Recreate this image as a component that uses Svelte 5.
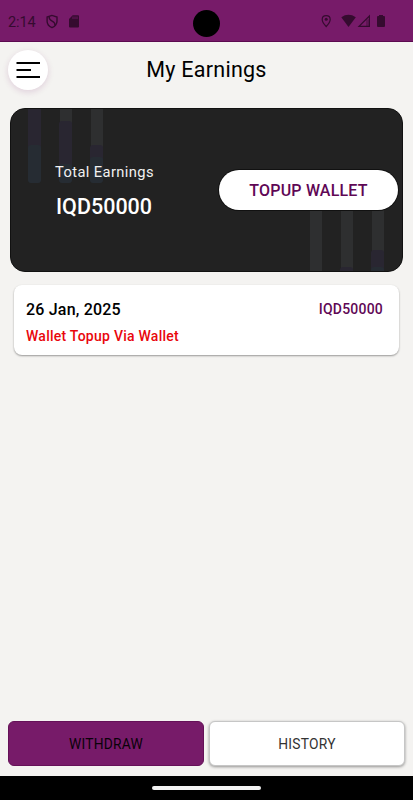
<script>
  let time = "2:14";
  let currency = "IQD";
  let total = 50000;
  let transactions = [
    { date: "26 Jan, 2025", amount: 50000, remark: "Wallet Topup Via Wallet" },
  ];
</script>

<style>
  :global(body) {
    margin: 0;
    background: #f4f3f1;
  }
  .screen {
    display: flex;
    flex-direction: column;
    height: 800px;
    font-family: Roboto, "Liberation Sans", sans-serif;
    color: #000;
    background: #f4f3f1;
  }
  .status {
    position: relative;
    box-sizing: border-box;
    height: 42px;
    display: flex;
    align-items: center;
    justify-content: space-between;
    background: #771b69;
    border-bottom: 1px solid #5c0a50;
    color: #350b2f;
  }
  .status svg {
    display: block;
  }
  .left {
    display: flex;
    align-items: center;
    padding: 2px 0 0 8px;
  }
  .time {
    width: 38px;
    padding-top: 2px;
    font-size: 14.5px;
    line-height: 20px;
    font-weight: 400;
    letter-spacing: -0.1px;
  }
  .camera {
    position: absolute;
    left: 193px;
    top: 10px;
    width: 27px;
    height: 27px;
    border-radius: 50%;
    background: #000;
  }
  header {
    display: grid;
    grid-template-columns: 48px 1fr 48px;
    align-items: center;
    height: 56px;
    padding: 0 8px;
    margin-bottom: 10px;
  }
  .menu {
    width: 40px;
    height: 40px;
    padding: 0;
    border: 0;
    border-radius: 50%;
    background: #fff;
    box-shadow: 0 2px 6px rgba(119, 27, 105, 0.16);
  }
  .menu svg {
    display: block;
  }
  h1 {
    margin: 0;
    font-size: 21.5px;
    line-height: 28px;
    font-weight: 400;
    letter-spacing: 0.25px;
    text-align: center;
  }
  .wallet {
    position: relative;
    box-sizing: border-box;
    display: flex;
    align-items: center;
    justify-content: space-between;
    height: 164px;
    margin: 0 10px;
    padding: 0 5px 0 44px;
    border: 1px solid #111;
    border-radius: 15px;
    background: #222;
    overflow: hidden;
    color: #fff;
  }
  .bars {
    position: absolute;
    left: -1px;
    top: -1px;
  }
  .total {
    position: relative;
    padding-top: 2px;
  }
  .label {
    font-size: 14.7px;
    line-height: 20px;
    letter-spacing: 0.4px;
    color: #f1f1f1;
  }
  .sum {
    padding: 11px 0 0 1px;
    font-size: 21.5px;
    line-height: 28px;
    font-weight: 500;
  }
  .topup {
    position: relative;
    width: 179px;
    height: 40px;
    margin-right: -1px;
    padding: 0;
    border: 0;
    border-radius: 20px;
    background: #fff;
    box-shadow: 0 0 0 1px #111;
    color: #5f0755;
    font: 500 16px Roboto, sans-serif;
    letter-spacing: 0.2px;
  }
  .list {
    flex: 1;
    margin: 0;
    padding: 12.5px 14px 0;
    list-style: none;
  }
  .entry {
    box-sizing: border-box;
    height: 70px;
    padding: 13px 16px 0 12px;
    border-radius: 8px;
    background: #fff;
    box-shadow: 0 1px 2px rgba(0, 0, 0, 0.38);
  }
  .row {
    display: flex;
    justify-content: space-between;
    height: 28px;
  }
  .date {
    font-size: 16px;
    line-height: 24px;
    font-weight: 500;
    letter-spacing: 0.2px;
  }
  .amount {
    font-size: 14px;
    line-height: 22px;
    font-weight: 500;
    letter-spacing: 0.2px;
    color: #5f0755;
  }
  .remark {
    font-size: 14px;
    line-height: 21px;
    font-weight: 500;
    letter-spacing: 0.25px;
    color: #e9060c;
  }
  .actions {
    display: flex;
    gap: 5px;
    height: 45px;
    padding: 0 8px 10px;
  }
  .actions button {
    box-sizing: border-box;
    flex: 1;
    padding: 1px 0 0;
    border-radius: 6px;
    font: 400 13.8px Roboto, sans-serif;
    letter-spacing: 0.25px;
  }
  .withdraw {
    border: 1px solid #651158;
    background: #771b69;
    color: #0a0209;
  }
  .history {
    border: 1px solid #c6c6c6;
    background: #fff;
    box-shadow: 0 1px 3px rgba(0, 0, 0, 0.4);
    color: #333;
  }
  .nav {
    display: flex;
    justify-content: center;
    height: 24px;
    background: #000;
  }
  .handle {
    width: 109px;
    height: 4px;
    margin-top: 10px;
    border-radius: 2px;
    background: #f2f2f2;
  }
</style>

<div class="screen">
  <div class="status">
    <div class="left">
      <span class="time">{time}</span>
      <svg width="36" height="16" viewBox="0 0 36 16">
        <path d="M6 1.4 1.1 3V7.2C1.1 10.2 3.2 12.4 6 13.6C8.8 12.4 11 10.2 11 7.2V3Z" fill="none" stroke="currentColor" stroke-width="1.4" />
        <path d="M3.2 2.8C2.6 8.2 9.7 6.2 9 11.4" fill="none" stroke="currentColor" stroke-width="1.4" />
        <path d="M26.7 1.3H32Q33 1.3 33 2.3V12.6Q33 13.6 32 13.6H24Q23 13.6 23 12.6V5Z" fill="currentColor" />
        <path d="M27 2.5V5M29 2.5V5M31 2.5V5" stroke="#771b69" stroke-width="0.8" />
      </svg>
    </div>
    <span class="camera"></span>
    <svg width="93" height="42" viewBox="320 0 93 42">
      <path d="M326.2 15.6C323.8 15.6 322.2 17.3 322.2 19.4C322.2 22.2 326.2 26.5 326.2 26.5S330.2 22.2 330.2 19.4C330.2 17.3 328.6 15.6 326.2 15.6Z" fill="none" stroke="currentColor" stroke-width="1.2" />
      <circle cx="326.2" cy="19.3" r="1.5" fill="currentColor" />
      <path d="M341.3 17.2Q348.5 12.4 355.8 17.2L348.5 27Z" fill="currentColor" />
      <path d="M369.4 16V26.4H359Z" fill="none" stroke="currentColor" stroke-width="1.2" />
      <path d="M366 19.4H369.4V26.4H366Z" fill="currentColor" opacity="0.35" />
      <path d="M379 15H383V16H384Q385 16 385 17V26Q385 27 384 27H378Q377 27 377 26V17Q377 16 378 16H379Z" fill="currentColor" />
    </svg>
  </div>

  <header>
    <button class="menu" aria-label="Menu">
      <svg width="40" height="40" viewBox="0 0 40 40">
        <path d="M8.5 13H32M8.5 20H23M8.5 27H32" stroke="#000" stroke-width="1.9" />
      </svg>
    </button>
    <h1>My Earnings</h1>
  </header>

  <section class="wallet">
    <svg class="bars" width="393" height="164" viewBox="0 0 393 164">
      <g fill="#2e2f30">
        <rect x="50" y="-10" width="12" height="70" />
        <rect x="81" y="-10" width="12" height="70" />
        <rect x="300" y="70" width="12" height="100" />
        <rect x="331" y="70" width="12" height="100" />
        <rect x="362" y="70" width="12" height="100" />
      </g>
      <g fill="#292631">
        <rect x="18" y="-10" width="13" height="80" rx="3" />
        <rect x="49" y="13" width="13" height="60" rx="3" />
        <rect x="80" y="37" width="13" height="30" rx="3" />
        <rect x="330" y="159" width="13" height="20" rx="3" />
        <rect x="361" y="142" width="13" height="30" rx="3" />
      </g>
      <g fill="#262c33">
        <rect x="18" y="37" width="13" height="38" rx="3" />
        <rect x="49" y="56" width="13" height="19" rx="3" />
        <rect x="80" y="49" width="13" height="26" rx="3" />
        <rect x="361" y="159" width="13" height="20" rx="3" />
      </g>
    </svg>
    <div class="total">
      <div class="label">Total Earnings</div>
      <div class="sum">{currency}{total}</div>
    </div>
    <button class="topup">TOPUP WALLET</button>
  </section>

  <ul class="list">
    {#each transactions as item}
      <li class="entry">
        <div class="row">
          <span class="date">{item.date}</span>
          <span class="amount">{currency}{item.amount}</span>
        </div>
        <div class="remark">{item.remark}</div>
      </li>
    {/each}
  </ul>

  <div class="actions">
    <button class="withdraw">WITHDRAW</button>
    <button class="history">HISTORY</button>
  </div>

  <div class="nav"><span class="handle"></span></div>
</div>
